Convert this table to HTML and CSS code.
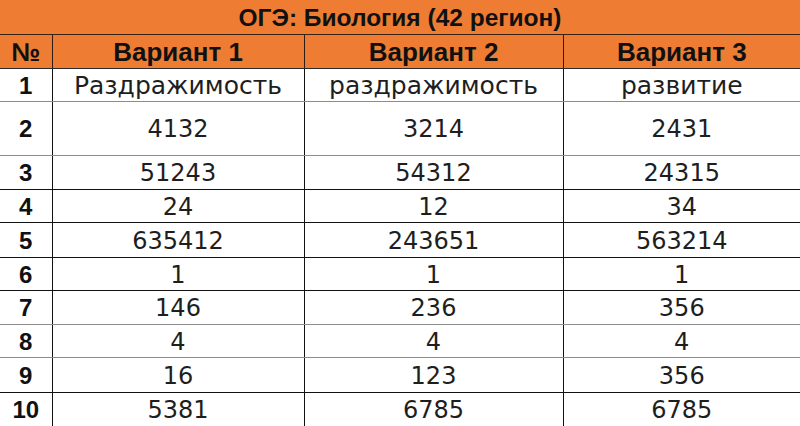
FILE: index.html
```html
<!DOCTYPE html>
<html lang="ru">
<head>
<meta charset="utf-8">
<title>ОГЭ: Биология (42 регион)</title>
<link rel="stylesheet" href="styles.css">
</head>
<body>
<table class="answers">
  <colgroup>
    <col class="c-num">
    <col class="c-v1">
    <col class="c-v2">
    <col class="c-v3">
  </colgroup>
  <thead>
    <tr class="title-row"><th colspan="4">ОГЭ: Биология (42 регион)</th></tr>
    <tr class="head-row"><th>№</th><th>Вариант 1</th><th>Вариант 2</th><th>Вариант 3</th></tr>
  </thead>
  <tbody>
    <tr class="r h33 grey words"><th>1</th><td>Раздражимость</td><td>раздражимость</td><td>развитие</td></tr>
    <tr class="r h54 grey"><th>2</th><td>4132</td><td>3214</td><td>2431</td></tr>
    <tr class="r h34 dark"><th>3</th><td>51243</td><td>54312</td><td>24315</td></tr>
    <tr class="r h33 dark"><th>4</th><td>24</td><td>12</td><td>34</td></tr>
    <tr class="r h35 dark"><th>5</th><td>635412</td><td>243651</td><td>563214</td></tr>
    <tr class="r h33 dark"><th>6</th><td>1</td><td>1</td><td>1</td></tr>
    <tr class="r h34 grey"><th>7</th><td>146</td><td>236</td><td>356</td></tr>
    <tr class="r h33 grey"><th>8</th><td>4</td><td>4</td><td>4</td></tr>
    <tr class="r h35 dark"><th>9</th><td>16</td><td>123</td><td>356</td></tr>
    <tr class="r h34 none"><th>10</th><td>5381</td><td>6785</td><td>6785</td></tr>
  </tbody>
</table>
</body>
</html>
```
FILE: styles.css
```css
html, body {
  margin: 0;
  padding: 0;
  background: #ffffff;
}

.answers {
  width: 800px;
  border-collapse: collapse;
  table-layout: fixed;
  font-family: "DejaVu Sans", "Liberation Sans", sans-serif;
  color: #1e1e1e;
}

.c-num { width: 52px; }
.c-v1 { width: 252px; }
.c-v2 { width: 259px; }
.c-v3 { width: 237px; }

.answers th,
.answers td {
  padding: 0;
  text-align: center;
  vertical-align: middle;
  line-height: 1;
  box-sizing: border-box;
}

.title-row th {
  height: 34px;
  padding-top: 2px;
  background: #ee7d33;
  font-family: "Liberation Sans", sans-serif;
  font-weight: 700;
  font-size: 24.5px;
  color: #111;
  border-bottom: 1px solid #3a2313;
}

.head-row th {
  height: 34px;
  padding-top: 2px;
  background: #ee7d33;
  font-family: "Liberation Sans", sans-serif;
  font-weight: 700;
  font-size: 26px;
  color: #111;
  border-bottom: 1px solid #2a2a2a;
  border-left: 1px solid #2a1d14;
}

.head-row th:first-child { border-left: none; }

.r th {
  padding-top: 2px;
  font-family: "Liberation Sans", sans-serif;
  font-weight: 700;
  font-size: 24px;
  color: #111;
  border-right: 1px solid #111;
}

.r td {
  padding-top: 2px;
  font-size: 24px;
  font-weight: 400;
  border-left: 1px solid #111;
}

.words td { font-size: 25px; }

.grey th, .grey td { border-bottom: 1px solid #8c8c8c; }
.dark th, .dark td { border-bottom: 1px solid #111; }
.none th, .none td { border-bottom: none; }

.h33 { height: 33px; }
.h34 { height: 34px; }
.h35 { height: 35px; }
.h54 { height: 54px; }
```
